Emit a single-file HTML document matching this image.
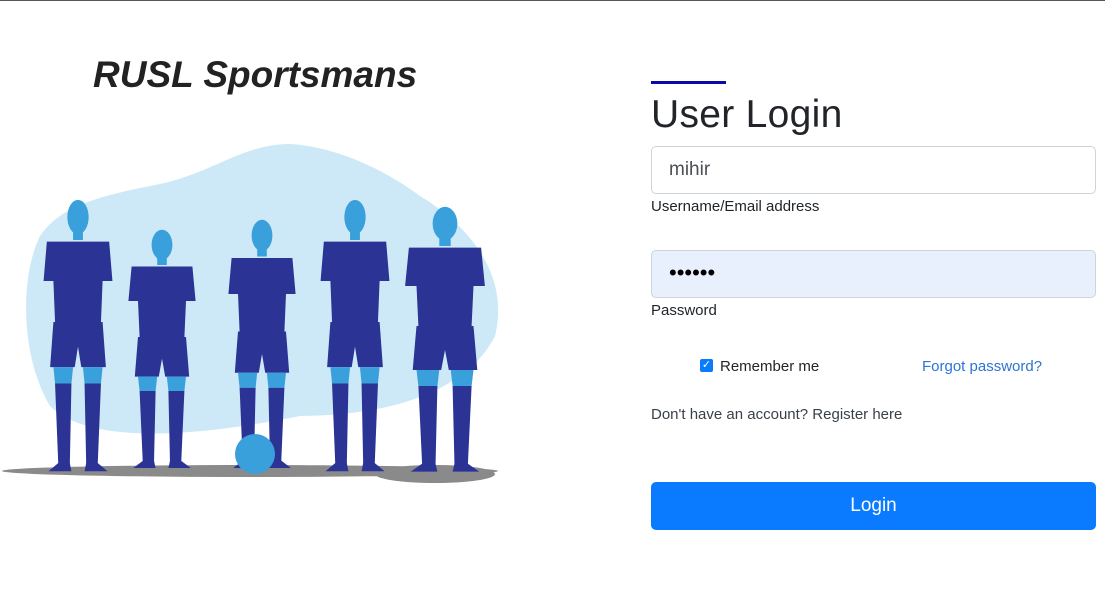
<!DOCTYPE html>
<html><head><meta charset="utf-8"><style>
*{box-sizing:border-box;margin:0;padding:0}
body{width:1105px;height:607px;background:#fff;font-family:"Liberation Sans",sans-serif;position:relative;overflow:hidden;border-top:1px solid #555}
.t{position:absolute;left:93px;top:53px;font-size:37px;font-weight:bold;font-style:italic;color:#222}
.bar{position:absolute;left:651px;top:80px;width:75px;height:3px;background:#0a0aa8}
h1{position:absolute;left:651px;top:92px;font-size:39px;color:#212529;font-weight:normal;letter-spacing:.3px}
.in{position:absolute;left:651px;width:445px;height:48px;border:1px solid #ced4da;border-radius:5px;padding-left:17px;font-size:19px;line-height:46px;color:#495057}
.lb{position:absolute;left:651px;font-size:15px;color:#212529}
.btn{position:absolute;left:651px;top:481px;width:445px;height:48px;background:#0a7bff;border-radius:5px;color:#fff;font-size:19px;text-align:center;line-height:48px}
</style></head><body>
<div class="t">RUSL Sportsmans</div>
<svg style="position:absolute;left:0;top:135px" width="520" height="360" viewBox="0 0 520 360">
<defs>
<g id="f" fill="#2b3494">
<ellipse cx="0" cy="22" rx="13" ry="21" fill="#3aa0dc"/>
<rect x="-6" y="38" width="12" height="12" fill="#3aa0dc"/>
<path d="M-38 52 L38 52 L42 100 L30 100 L28 150 L-28 150 L-30 100 L-42 100Z"/>
<path d="M-30 150 L30 150 L34 205 L4 205 L0 180 L-4 205 L-34 205Z"/>
<path d="M-30 205 L-6 205 L-8 225 L-28 225Z M6 205 L30 205 L28 225 L8 225Z" fill="#3aa0dc"/>
<path d="M-28 225 L-8 225 L-10 325 L-24 325Z M8 225 L28 225 L24 325 L10 325Z"/>
<path d="M-24 322 L-10 322 L-8 332 L-36 332Z M10 322 L24 322 L36 332 L8 332Z"/>
</g>
</defs>
<path d="M40 100 C20 140 20 220 50 270 C90 310 200 300 300 280 C400 280 470 250 495 200 C510 140 470 90 420 60 C380 30 330 10 290 8 C240 8 210 40 150 50 C100 60 60 70 40 100Z" fill="#cde9f8"/>
<ellipse cx="250" cy="335" rx="248" ry="6" fill="#8a8a8a"/>
<ellipse cx="435" cy="338" rx="60" ry="9" fill="#8a8a8a"/>
<use href="#f" transform="translate(78,63) scale(.82)"/>
<use href="#f" transform="translate(162,93) scale(.8,.72)"/>
<use href="#f" transform="translate(262,83) scale(.8,.75)"/>
<use href="#f" transform="translate(355,63) scale(.82)"/>
<use href="#f" transform="translate(445,70) scale(.95,.8)"/>
<circle cx="255" cy="318" r="20" fill="#3aa0dc"/>
</svg>
<div class="bar"></div>
<h1>User Login</h1>
<div class="in" style="top:145px">mihir</div>
<div class="lb" style="top:197px">Username/Email address</div>
<div class="in" style="top:249px;background:#e8f0fe;font-size:22px;color:#000;line-height:44px">••••••</div>
<div class="lb" style="top:301px">Password</div>
<div style="position:absolute;left:700px;top:358px;width:13px;height:13px;background:#0a7bff;border-radius:2px;color:#fff;font-size:11px;line-height:13px;text-align:center">✓</div>
<div class="lb" style="left:720px;top:357px">Remember me</div>
<div class="lb" style="left:922px;top:357px;color:#2c74d6">Forgot password?</div>
<div class="lb" style="top:405px;color:#3a4048">Don't have an account? Register here</div>
<div class="btn">Login</div>
</body></html>
